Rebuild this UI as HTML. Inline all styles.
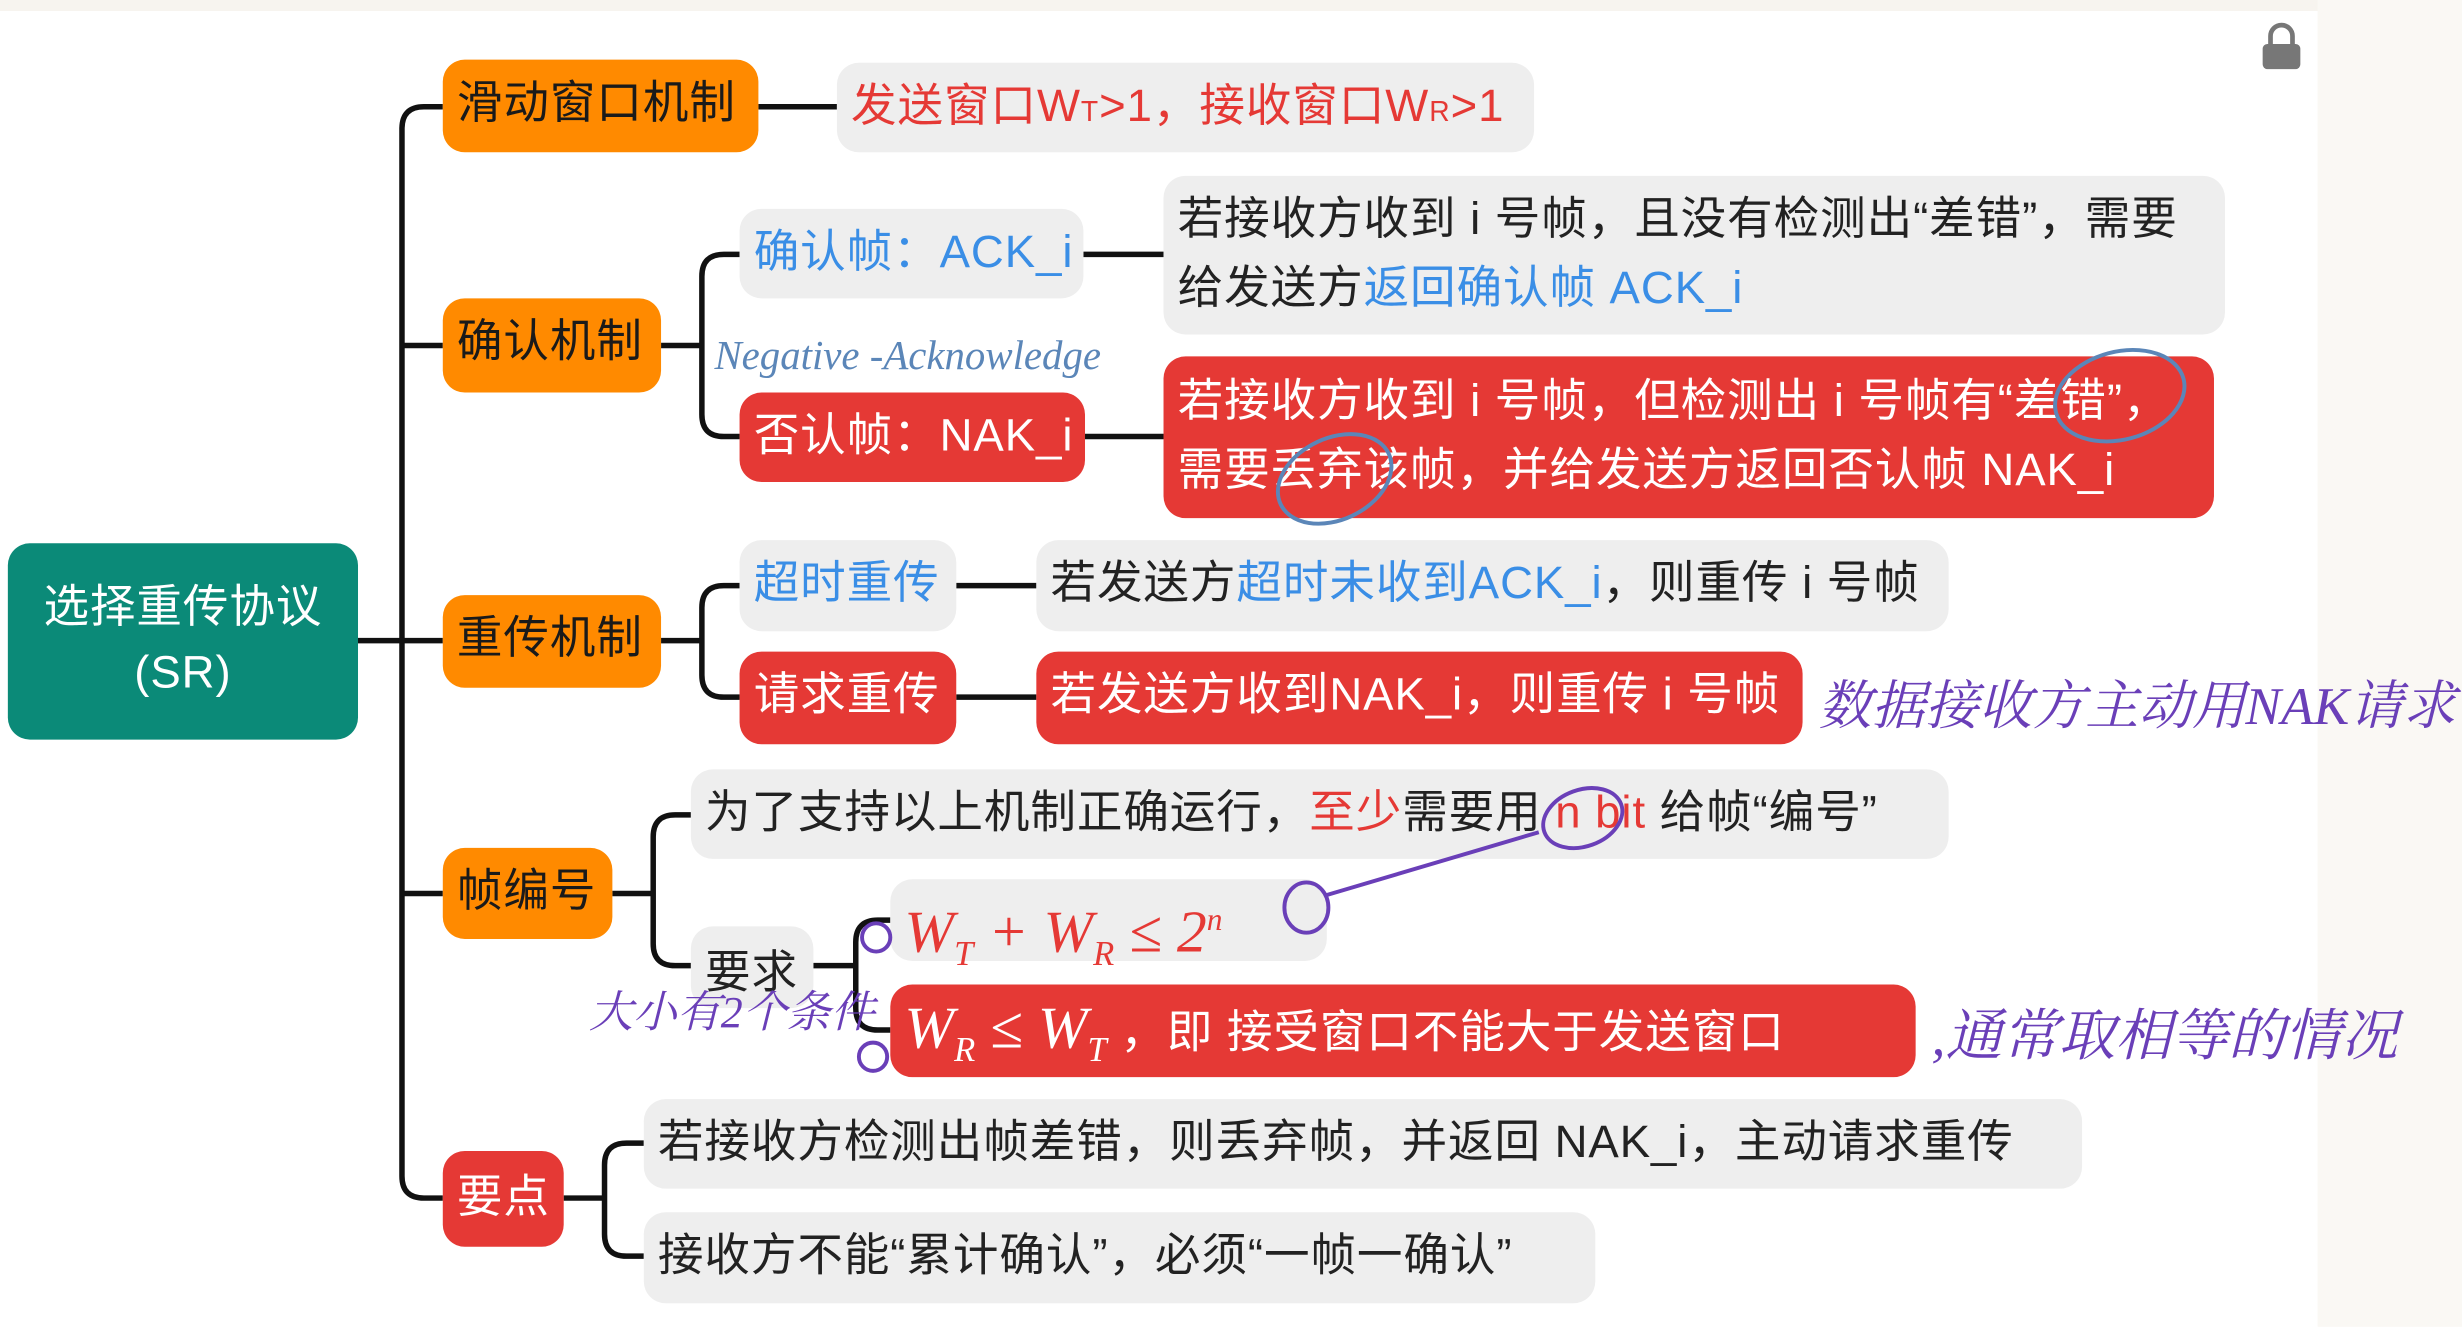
<!DOCTYPE html>
<html><head><meta charset="utf-8"><style>
html,body{margin:0;padding:0;width:2462px;height:1327px;overflow:hidden;background:#fff}
#w{position:absolute;left:0;top:0;width:1568px;height:845px;transform:scale(1.5702);transform-origin:0 0;font-family:"Liberation Sans","Noto Sans CJK SC",sans-serif}
.b{position:absolute;border-radius:14px;box-sizing:border-box;font-size:29px;letter-spacing:0.6px;line-height:57px;padding:0 9px;white-space:nowrap;color:#222}
.o{background:#ff8a00;color:#1a1a1a}
.r{background:#e53935;color:#fff}
.g{background:#eeeeee}
.bl{color:#3a8ee6}
.rt{color:#e53935}
.hw{position:absolute;font-family:"Liberation Serif","Noto Serif CJK SC",serif;font-style:italic;white-space:nowrap}
.m{font-family:"Liberation Serif",serif;font-style:italic;letter-spacing:0}
</style></head><body><div id="w">
<div style="position:absolute;left:0;top:0;width:1568px;height:7px;background:#f7f4ef"></div>
<div style="position:absolute;left:1476px;top:0;width:92px;height:845px;background:#faf8f4"></div>
<svg style="position:absolute;left:0;top:0" width="1568" height="845">
<g fill="none" stroke="#111" stroke-width="3.5">
<path d="M228 408H256"/>
<path d="M282 68H270Q256 68 256 82V749Q256 763 270 763H282"/>
<path d="M256 220H282M256 408H282M256 569H282"/>
<path d="M421 220H447M447 176Q447 162 461 162H471M447 176V264Q447 278 461 278H471"/>
<path d="M421 408H447M447 387Q447 373 461 373H471M447 387V430Q447 444 461 444H471"/>
<path d="M390 569H416M416 533Q416 519 430 519H440M416 533V601Q416 615 430 615H440"/>
<path d="M518 615H545M545 600Q545 586 559 586H567M545 600V642Q545 656 559 656H567"/>
<path d="M359 763H385M385 742Q385 728 399 728H410M385 742V786Q385 800 399 800H410"/>
<path d="M483 68H533M690 162H741M691 278H741M609 373H660M609 444H660"/>
</g>
<rect x="1441" y="28" width="24" height="16" rx="3" fill="#777"/>
<path d="M1446 29V23a7 7 0 0 1 14 0V29" fill="none" stroke="#777" stroke-width="3"/>
</svg>
<div class="b" style="left:5px;top:346px;width:223px;height:125px;background:#0b8a78;color:#fff;text-align:center;line-height:42px;padding-top:20px;font-size:29px">选择重传协议<br>(SR)</div>
<div class="b o" style="left:282px;top:38px;width:201px;height:59px">滑动窗口机制</div>
<div class="b o" style="left:282px;top:190px;width:139px;height:60px">确认机制</div>
<div class="b o" style="left:282px;top:379px;width:139px;height:59px">重传机制</div>
<div class="b o" style="left:282px;top:540px;width:108px;height:58px">帧编号</div>
<div class="b r" style="left:282px;top:733px;width:77px;height:61px;line-height:61px">要点</div>
<div class="b g rt" style="left:533px;top:40px;width:444px;height:57px">发送窗口W<span style="font-size:18px">T</span>&gt;1，接收窗口W<span style="font-size:18px">R</span>&gt;1</div>
<div class="b g bl" style="left:471px;top:133px;width:219px;height:57px">确认帧：ACK_i</div>
<div class="b g" style="left:741px;top:112px;width:676px;height:101px;line-height:44px;padding-top:6px">若接收方收到 i 号帧，且没有检测出“差错”，需要<br>给发送方<span class="bl">返回确认帧 ACK_i</span></div>
<div class="b r" style="left:471px;top:250px;width:220px;height:57px">否认帧：NAK_i</div>
<div class="b r" style="left:741px;top:227px;width:669px;height:103px;line-height:44px;padding-top:7px">若接收方收到 i 号帧，但检测出 i 号帧有“差错”，<br>需要丢弃该帧，并给发送方返回否认帧 NAK_i</div>
<div class="b g bl" style="left:471px;top:344px;width:138px;height:58px">超时重传</div>
<div class="b g" style="left:660px;top:344px;width:581px;height:58px">若发送方<span class="bl">超时未收到ACK_i</span>，则重传 i 号帧</div>
<div class="b r" style="left:471px;top:415px;width:138px;height:59px">请求重传</div>
<div class="b r" style="left:660px;top:415px;width:488px;height:59px">若发送方收到NAK_i，则重传 i 号帧</div>
<div class="b g" style="left:440px;top:490px;width:801px;height:57px">为了支持以上机制正确运行，<span class="rt">至少</span>需要用 <span class="rt">n bit</span> 给帧“编号”</div>
<div class="b g" style="left:440px;top:590px;width:78px;height:52px;line-height:60px">要求</div>
<div class="b g rt" style="left:567px;top:560px;width:278px;height:52px;line-height:52px;font-size:38px"><span class="m">W<sub style="font-size:22px">T</sub> + W<sub style="font-size:22px">R</sub> ≤ 2<sup style="font-size:20px">n</sup></span></div>
<div class="b r" style="left:567px;top:627px;width:653px;height:59px"><span class="m" style="font-size:38px">W<sub style="font-size:22px">R</sub> ≤ W<sub style="font-size:22px">T</sub></span> ，即 接受窗口不能大于发送窗口</div>
<div class="b g" style="left:410px;top:700px;width:916px;height:57px">若接收方检测出帧差错，则丢弃帧，并返回 NAK_i，主动请求重传</div>
<div class="b g" style="left:410px;top:772px;width:606px;height:58px">接收方不能“累计确认”，必须“一帧一确认”</div>
<div class="hw" style="left:455px;top:212px;font-size:26px;color:#5b86b8">Negative -Acknowledge</div>
<div class="hw" style="left:1158px;top:422px;font-size:34px;color:#6a3fb8">数据接收方主动用NAK请求</div>
<div class="hw" style="left:1230px;top:632px;font-size:36px;color:#6a3fb8">,通常取相等的情况</div>
<div class="hw" style="left:375px;top:623px;font-size:28px;color:#6a3fb8">大小有2个条件</div>
<svg style="position:absolute;left:0;top:0" width="1568" height="845">
<g fill="none" stroke="#5b86b8" stroke-width="2.5">
<ellipse cx="1350" cy="252" rx="42" ry="28" transform="rotate(-15 1350 252)"/>
<ellipse cx="850" cy="305" rx="38" ry="26" transform="rotate(-25 850 305)"/>
</g>
<g fill="none" stroke="#6a3fb8" stroke-width="2.5">
<ellipse cx="1008" cy="521" rx="26" ry="18" transform="rotate(-20 1008 521)"/>
<ellipse cx="832" cy="578" rx="14" ry="16"/>
<path d="M845 570L980 530"/>
<circle cx="558" cy="597" r="9"/><circle cx="556" cy="673" r="9"/>
</g>
</svg>
</div></body></html>
